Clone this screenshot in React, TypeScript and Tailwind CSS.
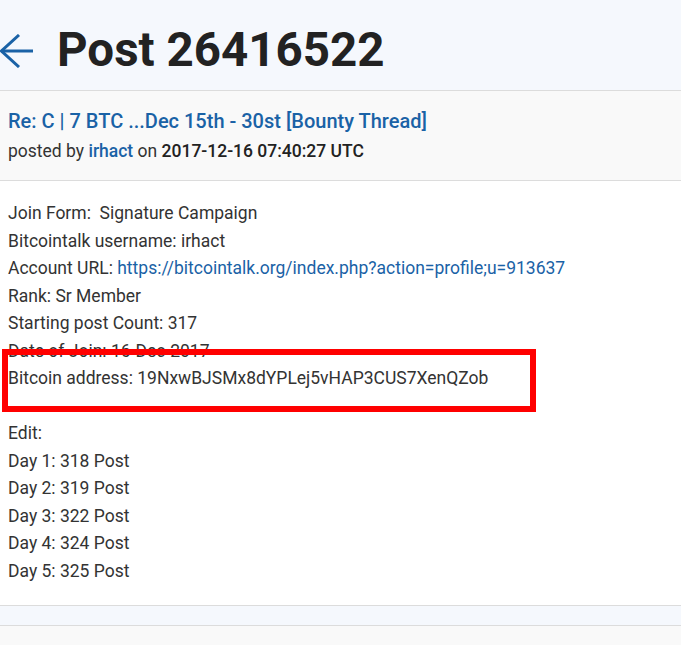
export default function App() {
  const lines = [
    "Starting post Count: 317",
    "Date of Join: 16-Dec-2017",
    "Bitcoin address: 19NxwBJSMx8dYPLej5vHAP3CUS7XenQZob",
  ];
  const days = ["Day 1: 318 Post", "Day 2: 319 Post", "Day 3: 322 Post", "Day 4: 324 Post", "Day 5: 325 Post"];

  return (
    <div className="min-h-[645px] bg-[#f9f9f9] font-['Roboto',sans-serif] overflow-hidden">
      {/* Page header */}
      <header className="h-[91px] bg-[#f5f8fd] border-b border-[#dcdcdc] flex items-center pt-[12px]">
        <svg className="w-[34px] h-[34px] shrink-0 text-[#1a62a6]" viewBox="0 0 34 34" fill="none" stroke="currentColor" strokeWidth="3">
          <line x1="1" y1="17" x2="33" y2="17" />
          <polyline points="19,1 1.5,17 19,33" />
        </svg>
        <h1 className="ml-[23px] text-[47.5px] font-bold text-[#222] leading-none">Post 26416522</h1>
      </header>

      {/* Post meta */}
      <div className="h-[90px] border-b border-[#dcdcdc] bg-[#f9f9f9] px-2 pt-[18px]">
        <a href="#" className="block text-[20px] font-medium text-[#1a62a6] leading-[24px]">
          Re: C | 7 BTC ...Dec 15th - 30st [Bounty Thread]
        </a>
        <p className="mt-[6px] text-[17.5px] text-[#333] leading-[24px]">
          posted by <a href="#" className="font-medium text-[#1a62a6]">irhact</a> on{" "}
          <span className="font-medium text-[#222]">2017-12-16 07:40:27 UTC</span>
        </p>
      </div>

      {/* Post body */}
      <div className="relative bg-white px-2 pt-[19px] pb-[20px] border-b border-[#dcdcdc] text-[17.5px] leading-[27.5px] text-[#333]">
        <div>Join Form:&nbsp; Signature Campaign</div>
        <div>Bitcointalk username: irhact</div>
        <div>
          Account URL:{" "}
          <a href="#" className="text-[#1a62a6]">https://bitcointalk.org/index.php?action=profile;u=913637</a>
        </div>
        <div>Rank: Sr Member</div>
        {lines.map((l) => (
          <div key={l}>{l}</div>
        ))}
        <div>&nbsp;</div>
        <div>Edit:</div>
        {days.map((d) => (
          <div key={d}>{d}</div>
        ))}
        <div className="absolute left-[2px] top-[168px] w-[534px] h-[63px] border-[6px] border-[#ff0000] pointer-events-none" />
      </div>

      {/* Footer strip */}
      <div className="h-[20px] bg-[#f5f8fd] border-b border-[#dcdcdc]" />
    </div>
  );
}
